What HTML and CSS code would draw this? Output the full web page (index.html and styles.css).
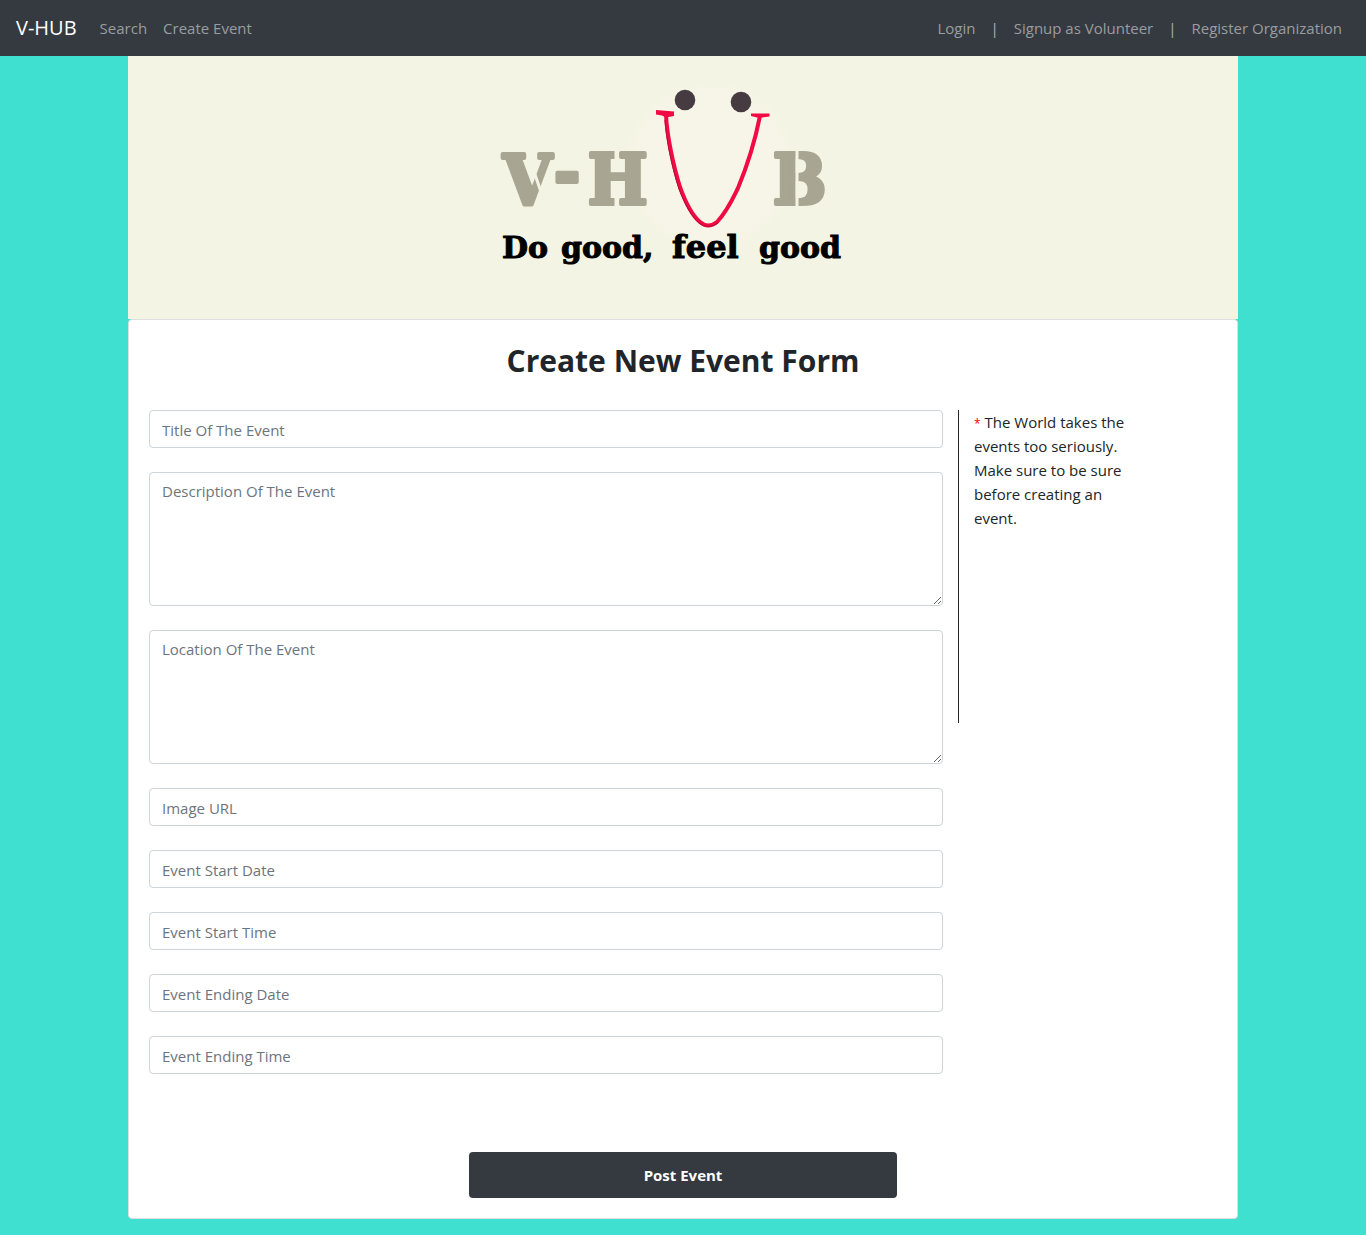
FILE: index.html
```html
<!DOCTYPE html>
<html lang="en">
<head>
<meta charset="utf-8">
<meta name="viewport" content="width=device-width, initial-scale=1">
<title>V-HUB - Create Event</title>
<link rel="stylesheet" href="styles.css">
</head>
<body>
<nav class="navbar">
  <a class="brand" href="#">V-HUB</a>
  <a class="nav-link" href="#">Search</a>
  <a class="nav-link" href="#">Create Event</a>
  <div class="nav-right">
    <a class="nav-link" href="#">Login</a>
    <span class="nav-sep">|</span>
    <a class="nav-link" href="#">Signup as Volunteer</a>
    <span class="nav-sep">|</span>
    <a class="nav-link" href="#">Register Organization</a>
  </div>
</nav>
<main class="container">
  <header class="hero">
    <svg class="logo" viewBox="128 56 1110 263" role="img" aria-label="V-HUB: Do good, feel good">
      <defs>
        <radialGradient id="glow">
          <stop offset="0.7" stop-color="#f7f5e8"/>
          <stop offset="1" stop-color="#f4f4e4"/>
        </radialGradient>
      </defs>
      <circle cx="710" cy="166" r="88" fill="url(#glow)"/>
      <g class="logo-name">
        <text x="503" y="204">V</text>
        <text x="554" y="196">-</text>
        <text x="588" y="204">H</text>
        <text x="773" y="204">B</text>
      </g>
      <g class="stencil">
        <path d="M530 160L541 192"/>
        <path d="M616 148V172M616 182V210"/>
        <path d="M797 148V210"/>
      </g>
      <circle cx="685" cy="100" r="10.3" fill="#463b40"/>
      <circle cx="741" cy="102" r="10.3" fill="#463b40"/>
      <path class="smile" d="M666 115C667 135 673 165 680 187C686 204 694 217 700 222Q708 229 717 222C728 210 733 198 738 188C748 164 756 136 760 116"/>
      <path class="smile-shade" d="M665 120C666 139 672 168 679 189C685 205 693 218 699 223Q708 230 718 223"/>
      <path fill="#f10a43" d="M656 110L674 111.500V116L666 117.500L662 115.500L656 114.500Z"/>
      <path fill="#f10a43" d="M751 113.500L769.500 113.500V116.500L762 117.500H757L751 116Z"/>
      <g class="logo-slogan">
        <text x="502" y="258">Do</text>
        <text x="561" y="258">good,</text>
        <text class="wide-word" x="672" y="258">feel</text>
        <text x="759" y="258">good</text>
      </g>
    </svg>
  </header>
  <section class="card">
    <h1 class="title">Create New Event Form</h1>
    <form class="event-form">
      <div class="columns">
        <div class="fields">
          <input class="control" type="text" placeholder="Title Of The Event" aria-label="Title Of The Event">
          <textarea class="control" rows="5" placeholder="Description Of The Event" aria-label="Description Of The Event"></textarea>
          <textarea class="control" rows="5" placeholder="Location Of The Event" aria-label="Location Of The Event"></textarea>
          <input class="control" type="text" placeholder="Image URL" aria-label="Image URL">
          <input class="control" type="text" placeholder="Event Start Date" aria-label="Event Start Date">
          <input class="control" type="text" placeholder="Event Start Time" aria-label="Event Start Time">
          <input class="control" type="text" placeholder="Event Ending Date" aria-label="Event Ending Date">
          <input class="control" type="text" placeholder="Event Ending Time" aria-label="Event Ending Time">
        </div>
        <aside class="note"><span class="star">*</span> The World takes the events too seriously. Make sure to be sure before creating an event.</aside>
      </div>
      <button class="submit" type="submit">Post Event</button>
    </form>
  </section>
</main>
</body>
</html>
```
FILE: styles.css
```css
* {
  box-sizing: border-box;
}

body {
  margin: 0;
  background: #40e0d0;
  color: #212529;
  font-family: "Open Sans", "Noto Sans", sans-serif;
  font-size: 15px;
  line-height: 24px;
}

.navbar {
  display: flex;
  align-items: center;
  min-height: 56px;
  padding: 8px 16px;
  background: #343a40;
}

.brand {
  margin-right: 15px;
  color: #fff;
  font-size: 20px;
  text-decoration: none;
}

.nav-link {
  padding: 8px;
  color: #9a9da0;
  text-decoration: none;
}

.nav-right {
  display: flex;
  align-items: center;
  margin-left: auto;
}

.nav-sep {
  padding: 0 7px;
  color: #b0b2b4;
}

.container {
  max-width: 1140px;
  margin: 0 auto;
  padding: 0 15px 16px;
}

.hero {
  background: #f4f4e4;
}

.logo {
  display: block;
  width: 100%;
}

.logo-name {
  fill: #a8a592;
  stroke: #a8a592;
  stroke-width: 4px;
  stroke-linejoin: round;
  font-family: "DejaVu Serif Condensed", "DejaVu Serif", serif;
  font-size: 70px;
  font-weight: bold;
}

.logo-slogan {
  fill: #000;
  stroke: #000;
  stroke-width: 1px;
  font-family: "DejaVu Serif", serif;
  font-size: 30px;
  font-weight: bold;
}

.wide-word {
  font-size: 32px;
}

.stencil {
  fill: none;
  stroke: #f5f4e4;
  stroke-width: 3px;
}

.smile {
  fill: none;
  stroke: #f10a43;
  stroke-width: 4px;
}

.smile-shade {
  fill: none;
  stroke: #b50c38;
  stroke-width: 1px;
}

.card {
  padding: 20px;
  border: 1px solid #dfdfdf;
  border-radius: 4px;
  background: #fff;
}

.title {
  margin: 0 0 28px;
  font-size: 30px;
  font-weight: 700;
  line-height: 42px;
  text-align: center;
}

.columns {
  display: grid;
  grid-template-columns: 794fr 259fr;
  column-gap: 15px;
  align-items: start;
}

.fields {
  display: grid;
  gap: 24px;
}

.control {
  display: block;
  width: 100%;
  height: 38px;
  padding: 7px 12px 5px;
  border: 1px solid #ced4da;
  border-radius: 4px;
  background: #fff;
  color: #495057;
  font: inherit;
}

textarea.control {
  height: 134px;
  padding: 6px 12px;
  resize: vertical;
}

.control::placeholder {
  color: #6c757d;
  opacity: 1;
}

.note {
  min-height: 313px;
  padding: 0 88px 0 15px;
  border-left: 1px solid #212529;
}

.star {
  color: #f00;
  font-size: 12px;
  line-height: 16px;
}

.submit {
  display: block;
  width: 40%;
  height: 46px;
  margin: 78px auto 0;
  border: 0;
  border-radius: 4px;
  background: #343a40;
  color: #fff;
  font: inherit;
  font-weight: 700;
}
```
